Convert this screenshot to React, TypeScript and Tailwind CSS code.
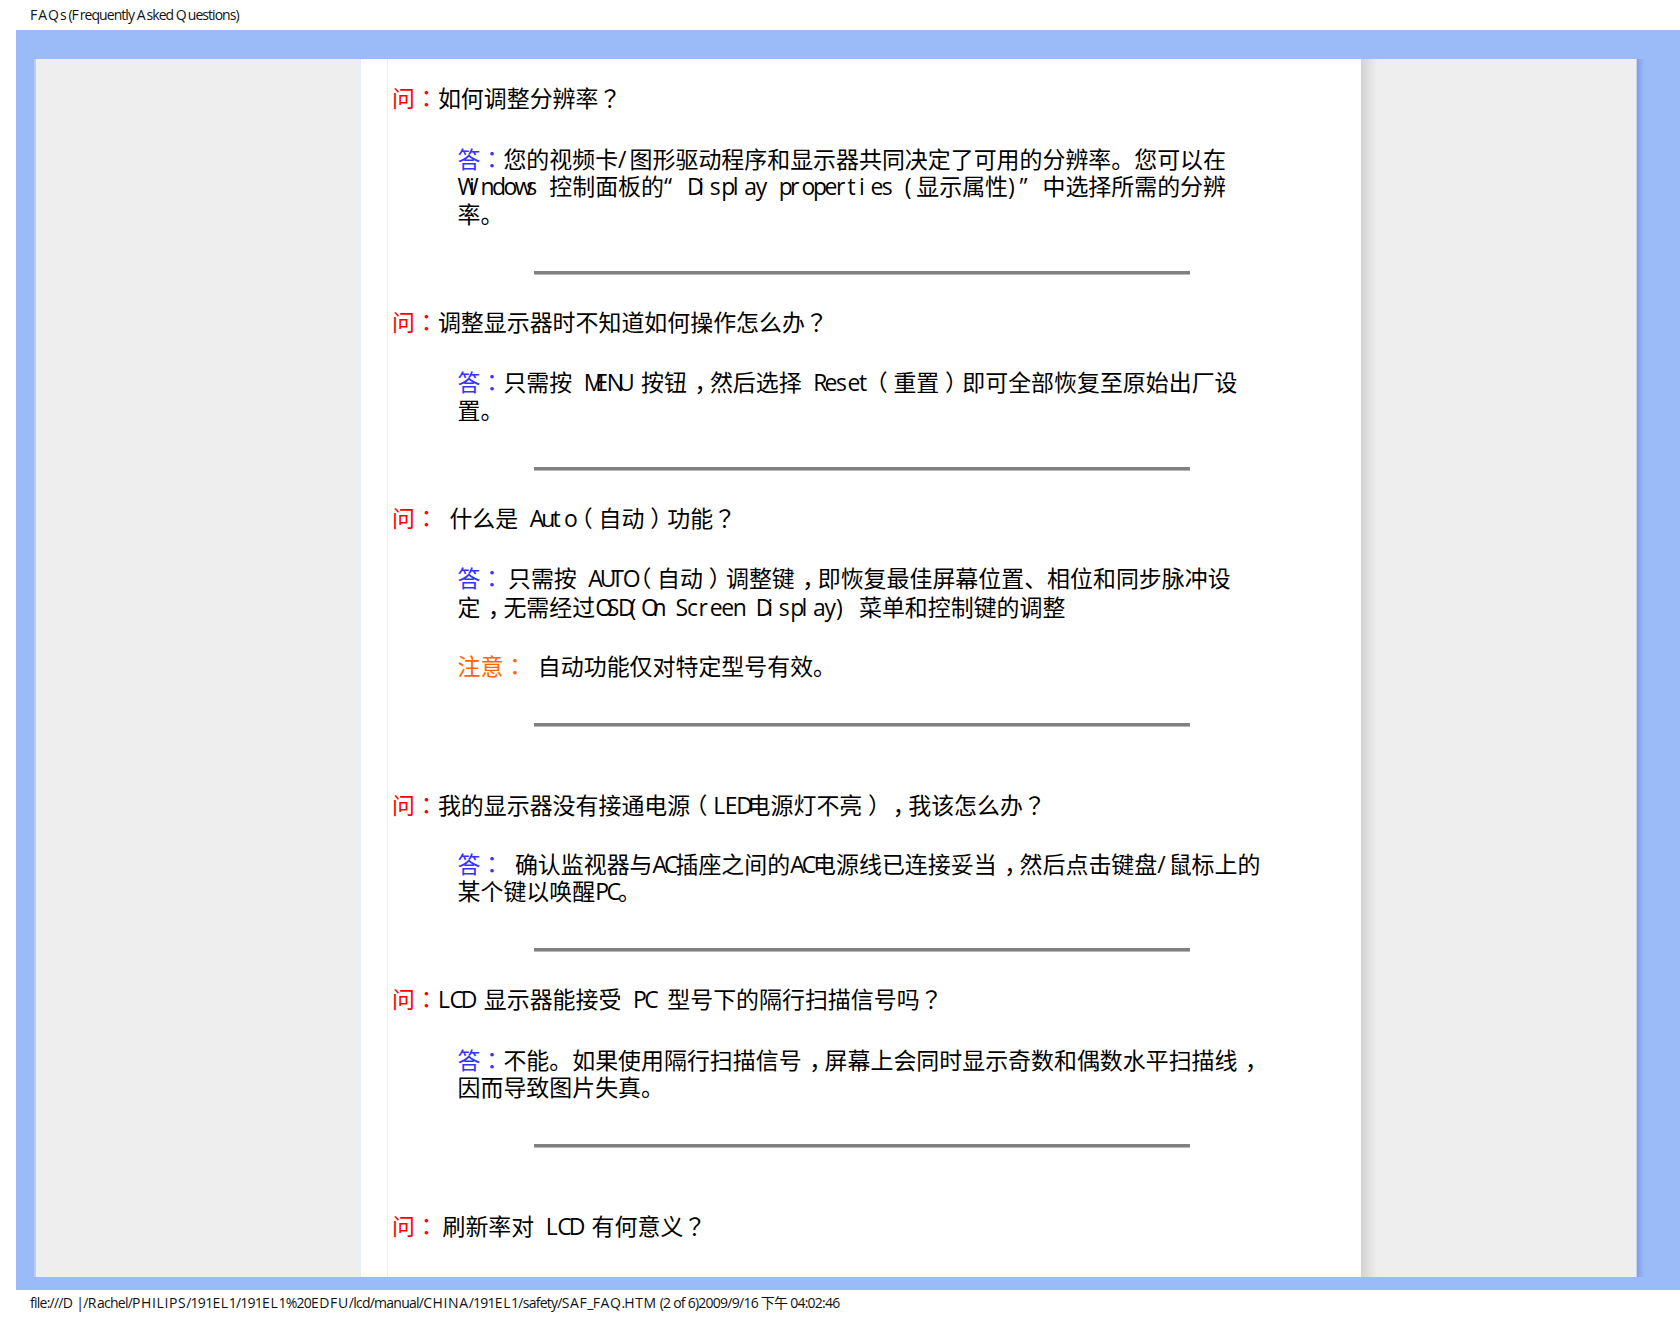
import React from "react";

const THIN = "\u2009";

function G({ t, c = "" }: { t: string; c?: string }) {
  const out: React.ReactNode[] = [];
  let buf = "";
  const flush = (k: number) => {
    if (buf) {
      out.push(<span key={"b" + k}>{buf}</span>);
      buf = "";
    }
  };
  Array.from(t).forEach((ch, i) => {
    if (ch === THIN) {
      flush(i);
      out.push(<span key={i} className="inline-block w-[0.2em]"> </span>);
    } else if (ch === "：" || ch === "？") {
      flush(i);
      out.push(<span key={i} className="font-['Noto_Sans_CJK_TC',sans-serif]">{ch}</span>);
    } else if (ch === "，") {
      flush(i);
      out.push(<span key={i} className="inline-block translate-x-[0.33em]">{ch}</span>);
    } else if (ch === "（") {
      flush(i);
      out.push(<span key={i} className="inline-block -translate-x-[0.25em]">{ch}</span>);
    } else if (ch === "）") {
      flush(i);
      out.push(<span key={i} className="inline-block translate-x-[0.25em]">{ch}</span>);
    } else if (ch === "“" || ch === "”") {
      flush(i);
      out.push(<span key={i} className="inline-block w-[1em] font-['Open_Sans',sans-serif]">{ch}</span>);
    } else if (ch.charCodeAt(0) < 128) {
      flush(i);
      out.push(<span key={i} className="inline-block w-[0.5em] font-['Open_Sans',sans-serif]">{ch}</span>);
    } else {
      buf += ch;
    }
  });
  flush(t.length);
  return <span className={c}>{out}</span>;
}

function Small({ t, caps }: { t: string; caps: string }) {
  const parts = t.split(/([A-Z]+)/);
  return (
    <>
      {parts.map((p, i) =>
        /^[A-Z]/.test(p) ? (
          <span key={i} className={caps}>{p}</span>
        ) : (
          <span key={i}>{p}</span>
        )
      )}
    </>
  );
}

const RED = "text-[#ff0000]";
const BLUE = "text-[#3333ff]";
const ORANGE = "text-[#ff6600]";

function Q({ p, t, className }: { p: string; t: string; className: string }) {
  return (
    <div className={"h-[27px] leading-[27px] " + className}>
      <G t={p} c={RED} />
      <G t={t} />
    </div>
  );
}

function A({ children, className = "" }: { children: React.ReactNode; className?: string }) {
  return <div className={"h-[27px] leading-[27px] pl-[65.5px] " + className}>{children}</div>;
}

function Rule({ className }: { className: string }) {
  return <div className={"h-[4px] w-[656px] ml-[142px] bg-[#808080] border-b border-[#b8b8b8] " + className} />;
}

export default function App() {
  return (
    <div className="w-[1680px] h-[1320px] bg-white text-black overflow-hidden font-['Noto_Sans_CJK_SC',sans-serif]">
      <div className="h-[30px] pl-[30px] pt-[5px] text-[14px] leading-[20px] tracking-[-0.95px] text-[#111] font-['Open_Sans','Noto_Sans_CJK_SC',sans-serif]">
        <Small t="FAQs (Frequently Asked Questions)" caps="tracking-[1px]" />
      </div>
      <div className="ml-[16px] h-[1260px] bg-[#9abaf8] pt-[29px] pb-[13px] pl-[18px] pr-[36px] flex">
        <div className="w-[2px] bg-[#b9cdf8]" />
        <div className="w-[325px] bg-[#eeeeee] border-r border-[#e6ecfa]" />
        <div className="w-[1000px] bg-white text-[22.94px]">
          <div className="ml-[26px] h-full border-l border-[#e9eefb] pl-[4px] overflow-hidden whitespace-pre">
            <Q className="mt-[25px]" p="问：" t="如何调整分辨率？" />
            <A className="mt-[34px]"><G t="答：" c={BLUE} /><G t="您的视频卡/图形驱动程序和显示器共同决定了可用的分辨率。您可以在" /></A>
            <A><G t="Windows 控制面板的“Display properties (显示属性)”中选择所需的分辨" /></A>
            <A className="mt-[1px]"><G t="率。" /></A>
            <Rule className="mt-[44px]" />
            <Q className="mt-[33px]" p="问：" t="调整显示器时不知道如何操作怎么办？" />
            <A className="mt-[33px]"><G t="答：" c={BLUE} /><G t="只需按 MENU 按钮，然后选择 Reset（重置）即可全部恢复至原始出厂设" /></A>
            <A className="mt-[1px]"><G t="置。" /></A>
            <Rule className="mt-[44px]" />
            <Q className="mt-[33px]" p="问：" t={" 什么是 Auto（自动）功能？"} />
            <A className="mt-[33px]"><G t="答：" c={BLUE} /><G t={THIN + "只需按 AUTO（自动）调整键，即恢复最佳屏幕位置、相位和同步脉冲设"} /></A>
            <A className="mt-[2px]"><G t="定，无需经过OSD(On Screen Display) 菜单和控制键的调整" /></A>
            <A className="mt-[32px]"><G t="注意：" c={ORANGE} /><G t=" 自动功能仅对特定型号有效。" /></A>
            <Rule className="mt-[44px]" />
            <Q className="mt-[64px]" p="问：" t="我的显示器没有接通电源（LED电源灯不亮），我该怎么办？" />
            <A className="mt-[32px]"><G t="答：" c={BLUE} /><G t=" 确认监视器与AC插座之间的AC电源线已连接妥当，然后点击键盘/鼠标上的" /></A>
            <A><G t="某个键以唤醒PC。" /></A>
            <Rule className="mt-[44px]" />
            <Q className="mt-[33px]" p="问：" t="LCD 显示器能接受 PC 型号下的隔行扫描信号吗？" />
            <A className="mt-[34px]"><G t="答：" c={BLUE} /><G t="不能。如果使用隔行扫描信号，屏幕上会同时显示奇数和偶数水平扫描线，" /></A>
            <A><G t="因而导致图片失真。" /></A>
            <Rule className="mt-[44px]" />
            <Q className="mt-[64px]" p="问：" t={THIN + "刷新率对 LCD 有何意义？"} />
          </div>
        </div>
        <div className="w-[276px] bg-[#eeeeee] bg-[linear-gradient(to_right,#d2d2d2,#eeeeee_16px)] border-r border-[#c4d2f2]" />
        <div className="w-[7px] bg-[linear-gradient(to_right,#7f9ee8,#9abaf8)]" />
      </div>
      <div className="pl-[30px] pt-[3px] text-[14px] leading-[20px] tracking-[-0.75px] text-[#111] whitespace-pre font-['Open_Sans','Noto_Sans_CJK_SC',sans-serif]">
        <Small t="file:///D |/Rachel/PHILIPS/191EL1/191EL1%20EDFU/lcd/manual/CHINA/191EL1/safety/SAF_FAQ.HTM (2 of 6)2009/9/16 下午 04:02:46" caps="tracking-[0.6px]" />
      </div>
    </div>
  );
}
